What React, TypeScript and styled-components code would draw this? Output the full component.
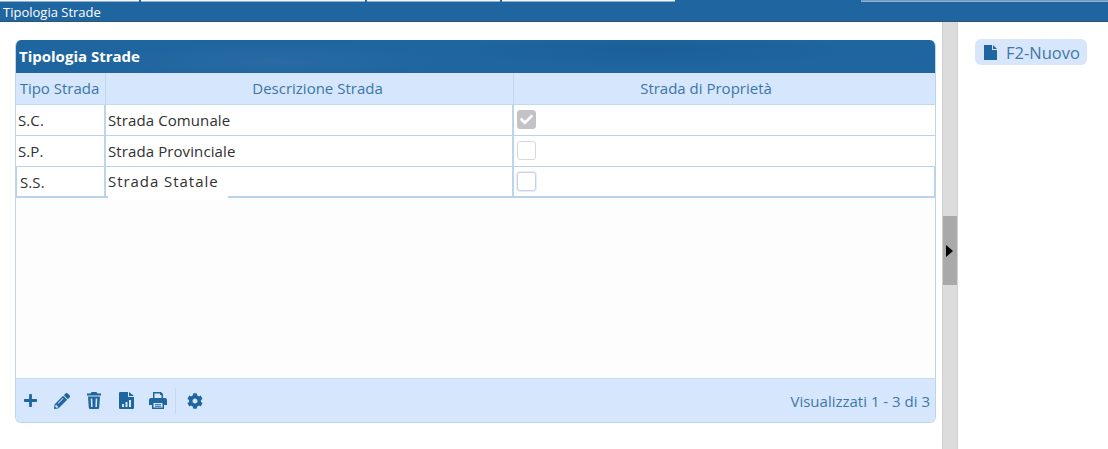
import React from "react";
import styled, { createGlobalStyle } from "styled-components";
import { FaPlus, FaPencilAlt, FaCog, FaCheck } from "react-icons/fa";

const Global = createGlobalStyle`
  html, body { margin: 0; padding: 0; background: #fff; }
  body { font-family: "Open Sans", "Noto Sans", sans-serif; overflow: hidden; }
`;

const Page = styled.div`
  width: 1108px;
  height: 449px;
  display: flex;
  flex-direction: column;
  overflow: hidden;
`;

const TopBar = styled.div`
  height: 22px;
  box-sizing: border-box;
  background: #1f659f;
  border-bottom: 1px solid #2d5578;
  display: flex;
  flex-direction: column;
  color: #fff;
  font-size: 13px;
`;

const TabStrip = styled.div`
  height: 2px;
  display: flex;
  gap: 2px;
`;

const TabEdge = styled.div<{ $w: number; $light?: boolean; $push?: boolean }>`
  width: ${(p) => p.$w}px;
  height: 2px;
  box-sizing: border-box;
  margin-left: ${(p) => (p.$push ? "auto" : "0")};
  background: ${(p) => (p.$light ? "#f4f7fb" : "#6f9cc4")};
  border-bottom: 1px solid #8fb0cf;
`;

const TopTitle = styled.div`
  padding-left: 3px;
  line-height: 18px;
  margin-top: 1px;
`;

const Body = styled.div`
  flex: 1;
  display: flex;
  min-height: 0;
`;

const LeftPane = styled.div`
  width: 942px;
  box-sizing: border-box;
  padding: 18px 6px 26px 15px;
  display: flex;
`;

const Panel = styled.section`
  flex: 1;
  display: flex;
  flex-direction: column;
  border: 1px solid #bcd5ec;
  border-top: 0;
  border-radius: 6px;
  overflow: hidden;
`;

const PanelHead = styled.header`
  height: 33px;
  margin: 0 -1px;
  padding-left: 4px;
  background:
    radial-gradient(ellipse 160px 20px at 260px 22px, #296ba3 0%, transparent 100%),
    radial-gradient(ellipse 200px 18px at 640px 10px, #1c5f97 0%, transparent 100%),
    #1f659f;
  color: #fff;
  font-weight: 700;
  font-size: 15px;
  line-height: 32px;
`;

const Grid = styled.div`
  flex: 1;
  background: #fdfdfd;
`;

const Row = styled.div<{ $head?: boolean; $h: number; $active?: boolean }>`
  display: grid;
  grid-template-columns: 90px 408px 1fr;
  height: ${(p) => p.$h}px;
  box-sizing: border-box;
  background: ${(p) => (p.$head ? "#d6e6fd" : "#fff")};
  border-bottom: ${(p) => (p.$active ? 2 : 1)}px solid ${(p) => (p.$head ? "#c3d9ef" : "#b9d4ea")};
  box-shadow: ${(p) => (p.$active ? "inset 1px 0 #b9d4ea, inset -1px 0 #b9d4ea" : "none")};
`;

const HeadCell = styled.div<{ $shift?: number }>`
  border-right: 1px solid #c3d9ef;
  color: #3a76a8;
  font-size: 15px;
  line-height: 30px;
  text-align: center;
  padding-left: ${(p) => Math.max(p.$shift ?? 0, 0)}px;
  padding-right: ${(p) => Math.max(-(p.$shift ?? 0), 0)}px;
  &:last-child { border-right: 0; }
`;

const Cell = styled.div<{ $inset?: number }>`
  border-right: 2px solid #bcd5ec;
  color: #303030;
  font-size: 15px;
  line-height: 31px;
  padding-left: ${(p) => p.$inset ?? 2}px;
  display: flex;
  align-items: center;
  letter-spacing: 0.1px;
  &:last-child { border-right: 0; }
`;

const PatchedLabel = styled.span`
  background: #fff;
  align-self: stretch;
  margin-bottom: -2px;
  padding-right: 9px;
  line-height: 29px;
  letter-spacing: 0.95px;
`;

const Check = styled.span<{ $on?: boolean; $focus?: boolean }>`
  width: 19px;
  height: 19px;
  box-sizing: border-box;
  margin-left: 1px;
  margin-top: -3px;
  border-radius: 3px;
  border: 1px solid ${(p) => (p.$on ? "#c3c3c7" : p.$focus ? "#c9d2e6" : "#d5d8df")};
  box-shadow: ${(p) => (p.$focus ? "0 0 0 1px #e8edf6" : "none")};
  background: ${(p) => (p.$on ? "#c3c3c7" : "#fff")};
  color: #fff;
  display: flex;
  align-items: center;
  justify-content: center;
  font-size: 13px;
`;

const Footer = styled.footer`
  height: 44px;
  box-sizing: border-box;
  background: #d6e6fd;
  border-top: 1px solid #c9dcf2;
  display: flex;
  align-items: center;
  gap: 4px;
  padding: 0 5px 0 0;
  color: #1f659f;
`;

const Tool = styled.span`
  width: 28px;
  display: flex;
  justify-content: center;
  font-size: 15px;
`;

const ToolSep = styled.span`
  width: 1px;
  height: 26px;
  background: #c6d7ee;
  margin: 0 1px 0 -1px;
`;

const Pager = styled.div`
  margin-left: auto;
  color: #3f78a8;
  font-size: 15px;
`;

const Splitter = styled.div`
  width: 16px;
  box-sizing: border-box;
  background: #dcdcdc;
  border-left: 1px solid #d0d0d0;
  border-right: 1px solid #d0d0d0;
  display: flex;
  align-items: center;
`;

const SplitHandle = styled.div`
  width: 100%;
  height: 69px;
  margin-top: 30px;
  background: #a9a9a9;
  display: flex;
  align-items: center;
  justify-content: center;
`;

const Arrow = styled.span`
  width: 0;
  height: 0;
  border-left: 7px solid #000;
  border-top: 6px solid transparent;
  border-bottom: 6px solid transparent;
  margin-right: 1px;
`;

const RightPane = styled.aside`
  flex: 1;
  padding: 17px 0 0 17px;
`;

const ActionButton = styled.button`
  width: 112px;
  height: 26px;
  padding: 0 0 0 9px;
  border: 0;
  border-radius: 6px;
  background: #d8e6fb;
  color: #3f78a8;
  display: flex;
  align-items: center;
  gap: 9px;
  font-family: inherit;
  font-size: 16.5px;
  svg { color: #1f659f; }
`;

const FileIcon = () => (
  <svg width="13" height="15" viewBox="0 0 13 15" fill="currentColor">
    <path d="M0 0h8v5h5v10H0V0z" />
    <path d="M9 0l4 4H9V0z" />
  </svg>
);

const TrashIcon = () => (
  <svg width="14" height="17" viewBox="0 0 14 17" fill="currentColor">
    <path d="M4.500 0h5l1 1.500H14v2H0v-2h3.500L4.500 0z" />
    <path
      fillRule="evenodd"
      d="M1 4.500h12l-.8 11.300a1.300 1.300 0 0 1-1.300 1.200H3.100a1.300 1.300 0 0 1-1.300-1.200L1 4.500zM3.700 6.500l.4 8.500h1.500l-.3-8.500H3.700zM8.700 6.500l-.3 8.500h1.500l.4-8.500H8.700z"
    />
  </svg>
);

const FileChart = () => (
  <svg width="15" height="17" viewBox="0 0 15 17" fill="currentColor">
    <path fillRule="evenodd" d="M0 1a1 1 0 0 1 1-1h8v5h6v11a1 1 0 0 1-1 1H1a1 1 0 0 1-1-1V1zM3 12h2v3H3v-3zM6.500 10h2v5h-2v-5zM10 8h2v7h-2V8z" />
    <path d="M10 0l5 4h-5V0z" />
  </svg>
);

const PrintIcon = () => (
  <svg width="18" height="17" viewBox="0 0 18 17" fill="currentColor">
    <path fillRule="evenodd" d="M4 0h8l2 2v4h-1.500V3H11V1.500H5.500V6H4V0z" />
    <path fillRule="evenodd" d="M2 6h14a2 2 0 0 1 2 2v5h-3v4H3v-4H0V8a2 2 0 0 1 2-2zM4.500 11v4.500h9V11h-9zM6 12.200h6v1H6v-1zM6 14h6v.8H6V14z" />
  </svg>
);

const rows = [
  { tipo: "S.C.", descr: "Strada Comunale", on: true },
  { tipo: "S.P.", descr: "Strada Provinciale", on: false },
  { tipo: "S.S.", descr: "Strada Statale", on: false },
];

export default function App() {
  return (
    <Page>
      <Global />
      <TopBar>
        <TabStrip>
          <TabEdge $w={139} $light />
          <TabEdge $w={224} $light />
          <TabEdge $w={133} $light />
          <TabEdge $w={173} $light />
          <TabEdge $w={247} $push />
        </TabStrip>
        <TopTitle>Tipologia Strade</TopTitle>
      </TopBar>
      <Body>
        <LeftPane>
          <Panel>
            <PanelHead>Tipologia Strade</PanelHead>
            <Grid>
              <Row $head $h={32}>
                <HeadCell $shift={-2}>Tipo Strada</HeadCell>
                <HeadCell $shift={16}>Descrizione Strada</HeadCell>
                <HeadCell $shift={-37}>Strada di Proprietà</HeadCell>
              </Row>
              {rows.map((r, i) => (
                <Row key={r.tipo} $h={31} $active={i === 2}>
                  <Cell $inset={i === 2 ? 4 : 2}>{r.tipo}</Cell>
                  <Cell>{i === 2 ? <PatchedLabel>{r.descr}</PatchedLabel> : r.descr}</Cell>
                  <Cell>
                    <Check $on={r.on} $focus={i === 2}>{r.on && <FaCheck />}</Check>
                  </Cell>
                </Row>
              ))}
            </Grid>
            <Footer>
              <Tool><FaPlus /></Tool>
              <Tool><FaPencilAlt size={16} /></Tool>
              <Tool><TrashIcon /></Tool>
              <Tool><FileChart /></Tool>
              <Tool><PrintIcon /></Tool>
              <ToolSep />
              <Tool><FaCog size={16} /></Tool>
              <Pager>Visualizzati 1 - 3 di 3</Pager>
            </Footer>
          </Panel>
        </LeftPane>
        <Splitter>
          <SplitHandle><Arrow /></SplitHandle>
        </Splitter>
        <RightPane>
          <ActionButton><FileIcon />F2-Nuovo</ActionButton>
        </RightPane>
      </Body>
    </Page>
  );
}
